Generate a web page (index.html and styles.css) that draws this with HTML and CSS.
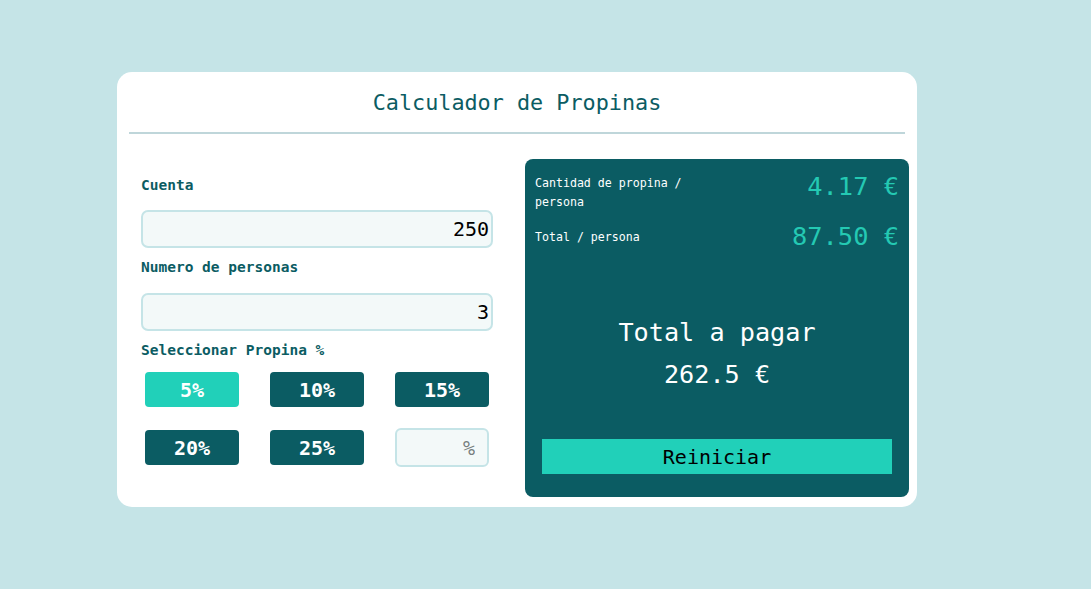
FILE: index.html
```html
<!DOCTYPE html>
<html lang="es">
<head>
<meta charset="utf-8">
<title>Calculador de Propinas</title>
<link rel="stylesheet" href="styles.css">
</head>
<body>
<main class="card">
  <header class="card-header">
    <h1 class="title">Calculador de Propinas</h1>
  </header>
  <section class="card-body">
    <div class="inputs">
      <label class="label label-first" for="bill">Cuenta</label>
      <input class="field field-gap-a" id="bill" type="text" value="250">
      <label class="label" for="people">Numero de personas</label>
      <input class="field field-gap-b" id="people" type="text" value="3">
      <div class="label">Seleccionar Propina %</div>
      <div class="tips">
        <button class="tip tip-active">5%</button>
        <button class="tip">10%</button>
        <button class="tip">15%</button>
        <button class="tip">20%</button>
        <button class="tip">25%</button>
        <input class="tip-custom" type="text" placeholder="%">
      </div>
    </div>
    <div class="panel">
      <div class="row">
        <div class="row-label">Cantidad de propina / persona</div>
        <div class="row-value">4.17 €</div>
      </div>
      <div class="row row-second">
        <div class="row-label">Total / persona</div>
        <div class="row-value row-value-raised">87.50 €</div>
      </div>
      <div class="total-title">Total a pagar</div>
      <div class="total-value">262.5 €</div>
      <button class="reset">Reiniciar</button>
    </div>
  </section>
</main>
</body>
</html>
```

FILE: styles.css
```css
* {
  box-sizing: border-box;
}

html, body {
  margin: 0;
  padding: 0;
}

body {
  background: #c5e4e7;
  font-family: "DejaVu Sans Mono", "Liberation Mono", monospace;
  min-height: 589px;
  padding: 72px 0 0 117px;
}

.card {
  width: 800px;
  height: 435px;
  background: #ffffff;
  border-radius: 15px;
  display: flex;
  flex-direction: column;
}

.card-header {
  margin: 0 12px;
  border-bottom: 2px solid #bfd6da;
}

.title {
  margin: 0;
  height: 60px;
  line-height: 62px;
  text-align: center;
  font-weight: normal;
  font-size: 21.8px;
  color: #0b5c63;
}

.card-body {
  display: grid;
  grid-template-columns: 1fr 384px;
  padding: 25px 8px 10px 12px;
}

.inputs {
  display: flex;
  flex-direction: column;
  padding: 0 32px 0 12px;
}

.label {
  font-weight: bold;
  font-size: 14.5px;
  line-height: 20px;
  color: #0b5c63;
  margin-top: 9px;
}

.label-first {
  margin-top: 16px;
}

.field {
  width: 352px;
  height: 38px;
  border: 2px solid #c5e4e7;
  border-radius: 7px;
  background: #f3f9f9;
  text-align: right;
  font-family: inherit;
  font-size: 20px;
  color: #000;
  padding: 0 2px 0 10px;
  outline: none;
}

.field-gap-a {
  margin-top: 15px;
}

.field-gap-b {
  margin-top: 16px;
}

.tips {
  margin-top: 12px;
  padding-left: 4px;
  display: grid;
  grid-template-columns: repeat(3, 94px);
  grid-template-rows: 35px 39px;
  column-gap: 31px;
  row-gap: 21px;
  align-items: center;
}

.tip {
  height: 35px;
  border: none;
  border-radius: 4px;
  background: #0b5c63;
  color: #ffffff;
  font-family: inherit;
  font-weight: bold;
  font-size: 20px;
  padding: 0;
}

.tip-active {
  background: #21d0b9;
}

.tip-custom {
  height: 39px;
  width: 94px;
  border: 2px solid #c5e4e7;
  border-radius: 6px;
  background: #f3f9f9;
  font-family: inherit;
  font-size: 20px;
  text-align: right;
  padding: 0 12px 0 6px;
  outline: none;
}

.tip-custom::placeholder {
  color: #777f80;
}

.panel {
  background: #0b5c63;
  border-radius: 8px;
  height: 338px;
  padding: 15px 10px 23px 10px;
  display: flex;
  flex-direction: column;
}

.row {
  display: flex;
  justify-content: space-between;
  align-items: flex-start;
}

.row-second {
  margin-top: 16px;
}

.row-label {
  font-size: 11.6px;
  line-height: 19px;
  color: #ffffff;
  max-width: 160px;
}

.row-value {
  font-size: 25.4px;
  line-height: 24px;
  color: #24c9b3;
}

.row-value-raised {
  margin-top: -4px;
}

.total-title,
.total-value {
  text-align: center;
  color: #ffffff;
  font-size: 25.2px;
  line-height: 42px;
}

.total-title {
  margin-top: 64px;
}

.reset {
  margin: auto 7px 0 7px;
  height: 35px;
  border: none;
  background: #21d0b9;
  color: #000000;
  font-family: inherit;
  font-size: 20px;
  padding: 0;
}
```
